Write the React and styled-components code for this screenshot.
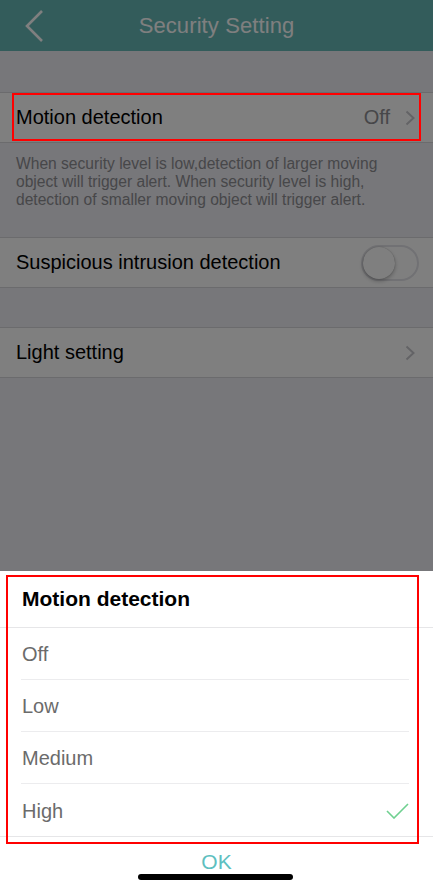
import React from "react";
import styled, { createGlobalStyle } from "styled-components";

const GlobalStyle = createGlobalStyle`
  body {
    margin: 0;
    font-family: "Liberation Sans", Arial, sans-serif;
  }
`;

const Screen = styled.div`
  position: relative;
  width: 433px;
  height: 888px;
  overflow: hidden;
  background: #efeef4;
`;

const Header = styled.div`
  height: 51px;
  background: #66b8b7;
  display: grid;
  grid-template-columns: 1fr auto 1fr;
  align-items: center;
`;

const Back = styled.div`
  padding-left: 25px;
  display: flex;
  align-items: center;
`;

const Title = styled.div`
  color: #fff;
  font-size: 22px;
  letter-spacing: 0.1px;
`;

const Group = styled.div`
  margin-top: ${(p) => p.gap}px;
  background: #fff;
  border-top: 1px solid #d6d6da;
  border-bottom: 1px solid #d6d6da;
`;

const Row = styled.div`
  position: relative;
  height: 49px;
  display: flex;
  align-items: center;
  padding: 0 18px 0 16px;
  font-size: 20px;
  color: #000;
`;

const Label = styled.span`
  flex: 1;
`;

const Value = styled.span`
  color: #8e8e93;
  margin-right: 15px;
`;

const Note = styled.p`
  margin: 0;
  box-sizing: border-box;
  padding: 12px 16px 0;
  height: 94px;
  font-size: 15.6px;
  line-height: 18px;
  color: #8e8e93;
`;

const Toggle = styled.div`
  width: 54px;
  height: 32px;
  border: 2px solid #e3e3e8;
  border-radius: 18px;
  background: #fff;
  margin-right: -4px;
  position: relative;
  &::after {
    content: "";
    position: absolute;
    top: 0;
    left: 0;
    width: 32px;
    height: 32px;
    border-radius: 50%;
    background: #fff;
    box-shadow: 0 2px 4px rgba(0, 0, 0, 0.28), 0 0 1px rgba(0, 0, 0, 0.3);
  }
`;

const Backdrop = styled.div`
  position: absolute;
  inset: 0;
  background: rgba(0, 0, 0, 0.5);
  z-index: 1;
`;

const Mark = styled.div`
  position: absolute;
  top: ${(p) => p.top}px;
  left: ${(p) => p.left}px;
  width: ${(p) => p.w}px;
  height: ${(p) => p.h}px;
  border: 2px solid #ff0000;
  box-sizing: border-box;
  z-index: 3;
  pointer-events: none;
`;

const Sheet = styled.div`
  position: absolute;
  left: 0;
  right: 0;
  bottom: 0;
  height: 317px;
  background: #fff;
  z-index: 2;
  display: flex;
  flex-direction: column;
`;

const SheetTitle = styled.div`
  height: 57px;
  box-sizing: border-box;
  padding: 0 22px;
  display: flex;
  align-items: center;
  font-size: 21px;
  font-weight: bold;
  color: #000;
  border-bottom: 1px solid #e6e6e8;
`;

const Option = styled.div`
  height: 52px;
  box-sizing: border-box;
  margin: 0 24px 0 21px;
  padding-left: 1px;
  padding-top: 2px;
  display: flex;
  align-items: center;
  justify-content: space-between;
  font-size: 20px;
  color: #6b6b6b;
  border-bottom: ${(p) => (p.last ? "none" : "1px solid #ececee")};
`;

const Footer = styled.div`
  flex: 1;
  border-top: 1px solid #e6e6e8;
  display: flex;
  justify-content: center;
  padding-top: 13px;
  box-sizing: border-box;
`;

const OkButton = styled.div`
  font-size: 21px;
  color: #5ebfc0;
  line-height: 24px;
`;

const HomeBar = styled.div`
  position: absolute;
  left: 138px;
  bottom: 8px;
  width: 155px;
  height: 6px;
  border-radius: 3px;
  background: #000;
`;

const Chevron = () => (
  <svg width="10" height="16" viewBox="0 0 10 16">
    <polyline
      points="1.5,1.5 8.5,8 1.5,14.5"
      fill="none"
      stroke="#c7c7cc"
      strokeWidth="2"
    />
  </svg>
);

const options = ["Off", "Low", "Medium", "High"];

export default function App() {
  return (
    <Screen>
      <GlobalStyle />
      <Header>
        <Back>
          <svg width="20" height="32" viewBox="0 0 20 32">
            <polyline
              points="17,1 2,16 17,31"
              fill="none"
              stroke="#fff"
              strokeWidth="2.6"
            />
          </svg>
        </Back>
        <Title>Security Setting</Title>
        <div />
      </Header>

      <Group gap={41}>
        <Row>
          <Label>Motion detection</Label>
          <Value>Off</Value>
          <Chevron />
          <Mark top={0} left={12} w={409} h={48} />
        </Row>
      </Group>
      <Note>
        When security level is low,detection of larger moving object will
        trigger alert. When security level is high, detection of smaller moving
        object will trigger alert.
      </Note>
      <Group gap={0}>
        <Row>
          <Label>Suspicious intrusion detection</Label>
          <Toggle />
        </Row>
      </Group>
      <Group gap={39}>
        <Row>
          <Label>Light setting</Label>
          <Chevron />
        </Row>
      </Group>

      <Backdrop />

      <Sheet>
        <SheetTitle>Motion detection</SheetTitle>
        {options.map((o, i) => (
          <Option key={o} last={i === options.length - 1}>
            {o}
            {o === "High" && (
              <svg width="23" height="16" viewBox="0 0 23 16">
                <polyline
                  points="1,8 8,15 22,1"
                  fill="none"
                  stroke="#6fd090"
                  strokeWidth="1.6"
                />
              </svg>
            )}
          </Option>
        ))}
        <Footer>
          <OkButton>OK</OkButton>
        </Footer>
        <Mark top={4} left={6} w={413} h={269} />
        <HomeBar />
      </Sheet>
    </Screen>
  );
}
